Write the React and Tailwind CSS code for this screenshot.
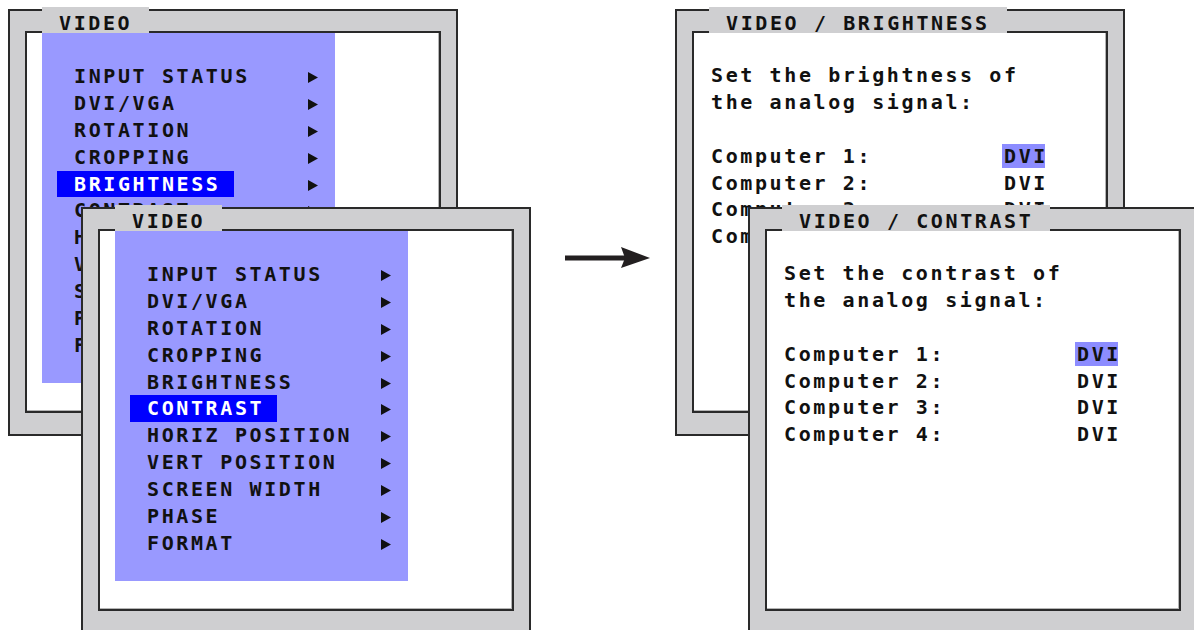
import React from "react";

const FONT =
  "font-['DejaVu_Sans_Mono',monospace] font-bold text-[20px] tracking-[2.61px] text-[#111]";

const ITEMS = [
  "INPUT STATUS",
  "DVI/VGA",
  "ROTATION",
  "CROPPING",
  "BRIGHTNESS",
  "CONTRAST",
  "HORIZ POSITION",
  "VERT POSITION",
  "SCREEN WIDTH",
  "PHASE",
  "FORMAT",
];

function Window({ pos, title, children }) {
  return (
    <div
      className={`absolute w-[450px] h-[427px] bg-[#cfcfd1] border-2 border-[#2a2a2a] ${pos} ${FONT}`}
    >
      <div className="absolute left-[32px] top-[-4px] h-[26px] bg-[#cfcfd1] px-[17px] pt-[5px] leading-[22px] whitespace-pre z-10">
        {title}
      </div>
      <div className="absolute left-[15px] top-[20px] right-[15px] bottom-[21px] bg-white border-2 border-[#2a2a2a] shadow-[inset_-1px_-1px_0_#b4b4b4] overflow-hidden">
        {children}
      </div>
    </div>
  );
}

function Menu({ active }) {
  return (
    <div className="ml-[15px] w-[293px] h-[350px] bg-[#9999ff] pt-[28px]">
      {ITEMS.map((label) => (
        <div key={label} className="flex h-[26.9px]">
          <div className="w-[266px] shrink-0">
            <span
              className={
                label === active
                  ? "inline-block ml-[15px] pl-[17px] pr-[13px] leading-[26.9px] whitespace-pre bg-[#0000ff] text-white"
                  : "inline-block ml-[15px] pl-[17px] pr-[13px] leading-[26.9px] whitespace-pre"
              }
            >
              {label}
            </span>
          </div>
          <svg className="mt-[11px] shrink-0" width="10" height="11" viewBox="0 0 10 11">
            <polygon points="0,0 10,5.5 0,11" fill="#111" />
          </svg>
        </div>
      ))}
    </div>
  );
}

function Setting({ what }) {
  const rows = [1, 2, 3, 4];
  return (
    <div className="pl-[17px] pt-[29px] whitespace-pre leading-[26.9px]">
      <div className="h-[26.9px]">{`Set the ${what} of`}</div>
      <div className="h-[26.9px]">the analog signal:</div>
      <div className="h-[26.9px]"></div>
      {rows.map((n) => (
        <div key={n} className="h-[26.9px]">
          {`Computer ${n}:         `}
          {n === 1 ? (
            <span className="bg-[#8c8cff] -ml-[2px] pl-[2px]">
              DV<span className="tracking-[0px]">I</span>
            </span>
          ) : (
            "DVI"
          )}
        </div>
      ))}
    </div>
  );
}

export default function App() {
  return (
    <div className="relative w-[1194px] h-[630px] bg-white overflow-hidden">
      <Window pos="left-[8px] top-[9px]" title="VIDEO">
        <Menu active="BRIGHTNESS" />
      </Window>
      <Window pos="left-[81px] top-[207px]" title="VIDEO">
        <Menu active="CONTRAST" />
      </Window>

      <svg
        className="absolute left-[560px] top-[240px]"
        width="100"
        height="40"
        viewBox="560 240 100 40"
      >
        <rect x="565" y="255.5" width="60" height="5" fill="#231f20" />
        <polygon points="621,247 650,258 621,268 625,258" fill="#231f20" />
      </svg>

      <Window pos="left-[675px] top-[9px]" title="VIDEO / BRIGHTNESS">
        <Setting what="brightness" />
      </Window>
      <Window pos="left-[748px] top-[207px]" title="VIDEO / CONTRAST">
        <Setting what="contrast" />
      </Window>
    </div>
  );
}
